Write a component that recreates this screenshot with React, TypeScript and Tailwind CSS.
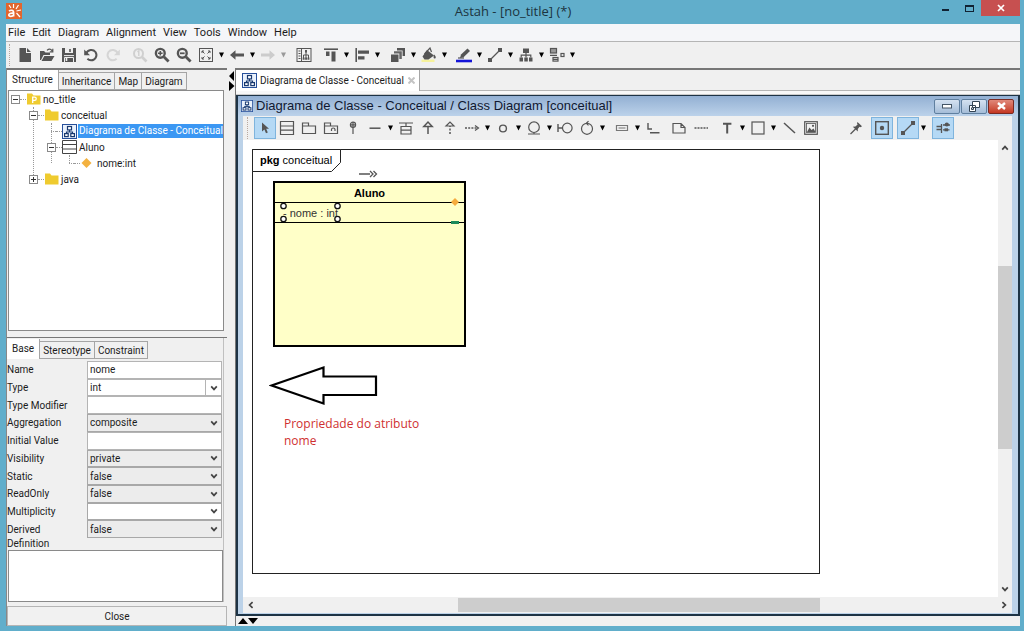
import type { ReactNode } from "react";

type IconProps = { children: ReactNode; size?: string; box?: string };

function Icon({ children, size = "size-4", box = "0 0 16 16" }: IconProps) {
  return (
    <svg viewBox={box} className={`${size} shrink-0`} fill="none" stroke="#555" strokeWidth="1.2" aria-hidden="true">
      {children}
    </svg>
  );
}

const Caret = ({ muted = false }: { muted?: boolean }) => (
  <svg viewBox="0 0 5 6" className="h-1.5 w-[5px]" aria-hidden="true">
    <path d="M0 0.5H5L2.5 5.5Z" fill={muted ? "#999" : "#000"} />
  </svg>
);

type Tool = {
  label: string;
  icon: ReactNode;
  caret?: boolean;
  muted?: boolean;
  active?: boolean;
  gap?: string;
};

function ToolItem({ label, icon, caret, muted, active, gap = "" }: Tool) {
  return (
    <div className={`flex shrink-0 items-center ${gap}`}>
      <button
        type="button"
        aria-label={label}
        className={`flex h-[22px] w-[22px] items-center justify-center border ${active ? "border-[#7fb4dd] bg-[#b5d9f5]" : "border-transparent"}`}
      >
        {icon}
      </button>
      {caret && (
        <button type="button" aria-label={`${label} options`} className="flex h-[22px] w-[9px] items-center justify-center">
          <Caret muted={muted} />
        </button>
      )}
    </div>
  );
}

const Grip = () => <span className="h-[22px] w-[3px] shrink-0 border-l border-dotted border-[#b8a8a0]" />;

const DiagramGlyph = ({ size = "size-[15px]" }: { size?: string }) => (
  <svg viewBox="0 0 15 15" className={`${size} shrink-0`} fill="none" aria-hidden="true">
    <rect x="0.5" y="0.5" width="14" height="14" fill="#e9f1fc" stroke="#27509b" />
    <g stroke="#17386f" strokeWidth="1.2">
      <rect x="5.5" y="2.5" width="4" height="3.4" fill="#fff" />
      <path d="M7.5 6V8M4.5 10V8H10.5V10" />
      <rect x="2.6" y="9.6" width="3.6" height="3" fill="#fff" />
      <rect x="8.8" y="9.6" width="3.6" height="3" fill="#fff" />
    </g>
  </svg>
);

const g = "#555";

const mainTools: Tool[] = [
  { label: "New", icon: <Icon><path d="M2.5 1H9V6H14V15H2.5ZM10 1L14 5H10Z" fill={g} stroke="none" /></Icon> },
  { label: "Open", icon: <Icon><path d="M1 13V4H5L6.5 5.5H11V8H4.5L2 13ZM5.3 9H15.5L12.5 14H2.5Z" fill={g} stroke="none" /><path d="M8 3.4C10 1.4 12 1.8 13.2 4M13.8 1.8V4.8H10.8" /></Icon> },
  { label: "Save", icon: <Icon><path d="M1 1H15V15H1Z" fill={g} stroke="none" /><path d="M4 1V6H12V1Z" fill="#eee" stroke="none" /><path d="M9 2V5" strokeWidth="1.6" /><path d="M3 8.6H13M3.5 15V10.5H12.5V15" stroke="#eee" strokeWidth="1" /><path d="M5.5 11V14" stroke="#eee" strokeWidth="1.6" /></Icon> },
  { label: "Undo", icon: <Icon><path d="M3 6.5C5 2.5 10 1.8 12.5 5C15 9 12 13.5 8 13.3C6.5 13.2 5.3 12.6 4.4 11.8" strokeWidth="2" /><path d="M1.2 2.5V8.2H7Z" fill={g} stroke="none" /></Icon> },
  { label: "Redo", icon: <Icon><g stroke="#d5d5d5"><path d="M13 6.5C11 2.5 6 1.8 3.5 5C1 9 4 13.5 8 13.3C9.5 13.2 10.7 12.6 11.6 11.8" strokeWidth="2" /><path d="M14.8 2.5V8.2H9Z" fill="#d5d5d5" stroke="none" /></g></Icon> },
  { label: "Zoom to 100%", gap: "ml-[5px]", icon: <Icon><g stroke="#d0d0d0"><circle cx="6.5" cy="6.5" r="4.5" strokeWidth="2" /><path d="M10 10L14.5 14.5" strokeWidth="2.6" /><path d="M5.5 5L6.8 4V9" strokeWidth="1.4" /></g></Icon> },
  { label: "Zoom in", icon: <Icon><circle cx="6.3" cy="6.3" r="4.4" strokeWidth="2.4" /><path d="M9.8 9.8L14.6 14.6" strokeWidth="2.8" /><path d="M6.3 4V8.6M4 6.3H8.6" strokeWidth="1.6" /></Icon> },
  { label: "Zoom out", icon: <Icon><circle cx="6.3" cy="6.3" r="4.4" strokeWidth="2.4" /><path d="M9.8 9.8L14.6 14.6" strokeWidth="2.8" /><path d="M4 6.3H8.6" strokeWidth="1.8" /></Icon> },
  { label: "Fit in window", caret: true, icon: <Icon><rect x="1.5" y="1.5" width="13" height="13" strokeWidth="1" /><path d="M6.5 6.5L4 4M4 6V4H6M9.5 6.5L12 4M10 4H12V6M6.5 9.5L4 12M4 10V12H6M9.5 9.5L12 12M10 12H12V10" strokeWidth="1" /></Icon> },
  { label: "Back", caret: true, icon: <Icon><path d="M1 8L6.5 3.2V6.6H15V9.4H6.5V12.8Z" fill={g} stroke="none" /></Icon> },
  { label: "Forward", caret: true, muted: true, icon: <Icon><path d="M15 8L9.5 3.2V6.6H1V9.4H9.5V12.8Z" fill="#ccc" stroke="none" /></Icon> },
  { label: "Mapping view", gap: "ml-[5px]", icon: <Icon><rect x="1" y="1.5" width="14" height="13" strokeWidth="1" /><path d="M5.5 1.5V14.5M2.5 4H4.5M2.5 6.5H4.5M2.5 9H4.5M2.5 11.5H4.5M10 5V8M7.5 11V8H12.5V11M10 8V11" strokeWidth="1" /><path d="M9 3H11V5.4H9ZM6.7 10.4H8.6V12.8H6.7ZM9.1 10.4H11V12.8H9.1ZM11.5 10.4H13.4V12.8H11.5Z" fill={g} stroke="none" /></Icon> },
  { label: "Align top", caret: true, gap: "ml-[5px]", icon: <Icon><path d="M1 2.2H15" strokeWidth="1.6" /><path d="M3 4.4H6.5V9H3ZM8.5 4.4H12.5V14.5H8.5Z" fill={g} stroke="none" /></Icon> },
  { label: "Align left", caret: true, icon: <Icon><path d="M2.2 1V15" strokeWidth="1.6" /><path d="M4 3.5H15V6.7H4ZM4 9.2H10.5V12.4H4Z" fill={g} stroke="none" /></Icon> },
  { label: "Bring to front", caret: true, gap: "ml-[5px]", icon: <Icon><path d="M7 1H15V9H12.6V3.4H7ZM1 7.4H8.5V15H1Z" fill={g} stroke="none" /><path d="M4 4.2H11.8V12H9.3V6.6H4Z" fill="#666" stroke="none" /></Icon> },
  { label: "Fill color", caret: true, icon: <Icon><path d="M0.5 13.8H13.5" stroke="#f6f29c" strokeWidth="2.4" /><path d="M6 3L13 8.5L7.5 12.5H3.5L1.5 9.5Z" fill={g} stroke="none" /><path d="M3.5 7L9 1L10.5 5" /><path d="M13 7.5C15.5 9.5 15 11.5 13.6 11.5C12.3 11.5 12.3 9.6 13 7.5Z" fill={g} stroke="none" /></Icon> },
  { label: "Line color", caret: true, gap: "ml-1", icon: <Icon><path d="M0 14H16" stroke="#1414d8" strokeWidth="2.6" /><path d="M4 11L5 7.5L11.5 1.5L14 4L7.5 10.2Z" fill={g} stroke="none" /><path d="M2 11H8" /></Icon> },
  { label: "Line style", caret: true, icon: <Icon><path d="M3 13L13 3" /><path d="M1 11H5V15H1ZM11 1H15V5H11Z" fill={g} stroke="none" /></Icon> },
  { label: "Tree layout", caret: true, icon: <Icon><path d="M5 1.5H11V6H5ZM1.5 10.5H5V14.5H1.5ZM6.3 10.5H9.8V14.5H6.3ZM11 10.5H14.5V14.5H11Z" fill={g} stroke="none" /><path d="M8 6V10.5M3.2 10.5V8.2H12.8V10.5" /></Icon> },
  { label: "Auto layout", caret: true, icon: <Icon><rect x="1.5" y="1.5" width="6" height="4.5" fill="#999" /><rect x="4" y="10.5" width="5" height="3.6" /><path d="M4 12.3H9M1 8.3H8" /><rect x="12" y="6.5" width="3" height="3" /></Icon> },
];

const diagramTools: Tool[] = [
  { label: "Select", active: true, icon: <Icon><path d="M5 2.5L12 8.7H9.2L10.8 12.4L9 13.2L7.4 9.6L5 11.6Z" fill={g} stroke="none" /></Icon> },
  { label: "Class", icon: <Icon><path d="M1.5 1.5H14.5V14.5H1.5ZM1.5 6H14.5M1.5 10.2H14.5" /></Icon> },
  { label: "Package", icon: <Icon><path d="M1.5 13.5V3H7.5V6H14.5V13.5ZM1.5 6H7.5" /></Icon> },
  { label: "Subsystem", icon: <Icon><path d="M1.5 13.5V3H7.5V6H14.5V13.5ZM1.5 6H7.5M8.5 11V9.5C8.5 7.5 12 7.5 12 9.5V11" /></Icon> },
  { label: "Nested class", icon: <Icon><circle cx="8" cy="4.8" r="2.6" /><path d="M8 2.2V14M5.4 4.8H10.6" /></Icon> },
  { label: "Association", caret: true, icon: <Icon><path d="M2.5 8.2H13.5" strokeWidth="1.5" /></Icon> },
  { label: "Association class", icon: <Icon><path d="M1 3H15M8 3V6.5M3 6.5H13V14H3ZM3 10.2H13" /></Icon> },
  { label: "Generalization", icon: <Icon><path d="M8 14V6.5M3.8 6.5L8 2L12.2 6.5Z" strokeWidth="1.5" /></Icon> },
  { label: "Realization", icon: <Icon><path d="M8 14V6" strokeDasharray="2 1.5" strokeWidth="1.5" /><path d="M4 6L8 2L12 6Z" /></Icon> },
  { label: "Dependency", caret: true, icon: <Icon><path d="M1 8H13" strokeDasharray="2 1.2" strokeWidth="1.4" /><path d="M11 5.5L14.5 8L11 10.5" /></Icon> },
  { label: "Interface", caret: true, icon: <Icon><circle cx="8" cy="8.5" r="3.4" strokeWidth="1.4" /></Icon> },
  { label: "Entity", caret: true, icon: <Icon><circle cx="8" cy="7.2" r="5.3" /><path d="M2 14H14M8 12.5V14" /></Icon> },
  { label: "Boundary", icon: <Icon><circle cx="10.3" cy="8" r="4.8" /><path d="M1 4V12M1 8H5.5" strokeWidth="1.4" /></Icon> },
  { label: "Control", caret: true, icon: <Icon><circle cx="8" cy="8.8" r="5.5" /><path d="M9.5 1.2L7.4 3.3L9.5 5.4" /></Icon> },
  { label: "Instance", caret: true, gap: "ml-1", icon: <Icon><path d="M2.5 5.5H13.5V10.5H2.5ZM4.5 8H11.5" stroke="#777" /></Icon> },
  { label: "Link", icon: <Icon><path d="M3 3V9H7M5 12.7H14.5" strokeWidth="1.4" /></Icon> },
  { label: "Note", gap: "ml-1", icon: <Icon><path d="M2 3.5H10L14 7.5V13H2ZM10 3.5V7.5H14" /></Icon> },
  { label: "Note anchor", icon: <Icon><path d="M1.5 8H15" strokeDasharray="2 1" strokeWidth="1.5" /></Icon> },
  { label: "Text", caret: true, gap: "ml-1", icon: <Icon><path d="M4 3.8H12.4M8.2 3.8V13.5" strokeWidth="2" /></Icon> },
  { label: "Rectangle", caret: true, icon: <Icon><rect x="2" y="2" width="12" height="12" /></Icon> },
  { label: "Line", icon: <Icon><path d="M3 3L14 13" strokeWidth="1.5" /></Icon> },
  { label: "Image", icon: <Icon><rect x="1.7" y="1.7" width="12.6" height="12.6" /><rect x="3.5" y="3.5" width="9" height="9" strokeWidth="0.8" /><path d="M4 12L6.5 7.5L8.5 10L10.5 8.5L12.5 12Z" fill={g} stroke="none" /><circle cx="10" cy="5.8" r="1.1" fill={g} stroke="none" /></Icon> },
  { label: "Lock tool", gap: "ml-[23px]", icon: <Icon><path d="M2.5 14L8 8.5" /><path d="M9.5 2L14 6.2L12.5 7.2L11.5 6.8L9.8 9V11.5L4.8 6.8L7.4 6.5L9.6 4.6L9 3.2Z" fill={g} stroke="none" /></Icon> },
  { label: "Center alignment", active: true, gap: "ml-1", icon: <Icon><rect x="1.7" y="1.7" width="12.6" height="12.6" strokeWidth="1.4" /><circle cx="8" cy="8" r="2.2" fill={g} stroke="none" /></Icon> },
  { label: "Line mode", active: true, caret: true, gap: "ml-1", icon: <Icon><path d="M3 13L13 3" /><path d="M1 11H5V15H1ZM11 1H15V5H11Z" fill={g} stroke="none" /></Icon> },
  { label: "Alignment guides", active: true, gap: "ml-1", icon: <Icon><path d="M1.5 6.5H6.5M1.5 9.5H6.5M6.5 4V13M8 9.8H14.5M8 5H15" strokeWidth="1.3" /><circle cx="11.8" cy="4.5" r="2.1" fill={g} stroke="none" /><path d="M9.5 8.3H13V11.3H9.5Z" fill={g} stroke="none" /></Icon> },
];

const FolderIcon = ({ project = false }: { project?: boolean }) => (
  <svg viewBox="0 0 16 14" className="h-3.5 w-4 shrink-0" aria-hidden="true">
    <path d="M1 1.5H6L7.5 3.5H14.5V12.5H1Z" fill="#efcb2f" />
    {project && <path d="M6.7 11V5.2H8.6C10.8 5.2 10.8 8.4 8.6 8.4H6.7" fill="none" stroke="#fff" strokeWidth="1.3" />}
  </svg>
);

const ClassIcon = () => (
  <svg viewBox="0 0 16 16" className="size-4 shrink-0" fill="#fff" stroke="#444" aria-hidden="true">
    <path d="M0.5 1.5H14.5V14.5H0.5ZM0.5 5.5H14.5M0.5 10H14.5" />
  </svg>
);

type Node = { name: string; icon: ReactNode; state?: "open" | "closed"; selected?: boolean; children?: Node[] };

const tree: Node[] = [
  {
    name: "no_title",
    icon: <FolderIcon project />,
    state: "open",
    children: [
      {
        name: "conceitual",
        icon: <FolderIcon />,
        state: "open",
        children: [
          { name: "Diagrama de Classe - Conceitual", icon: <DiagramGlyph size="mr-px size-[15px]" />, selected: true },
          {
            name: "Aluno",
            icon: <ClassIcon />,
            state: "open",
            children: [
              {
                name: "nome:int",
                icon: (
                  <svg viewBox="0 0 16 16" className="size-4 shrink-0" aria-hidden="true">
                    <path d="M6.5 3L11.5 8L6.5 13L1.5 8Z" fill="#f3b13f" />
                  </svg>
                ),
              },
            ],
          },
        ],
      },
      { name: "java", icon: <FolderIcon />, state: "closed" },
    ],
  },
];

function TreeList({ nodes, root = false }: { nodes: Node[]; root?: boolean }) {
  return (
    <ul className={root ? "" : "relative ml-[18px]"}>
      {!root && <li aria-hidden="true" className="absolute top-0 bottom-2 left-1 border-l border-dotted border-[#999]" />}
      {nodes.map((n) => (
        <li key={n.name}>
          <div className="relative flex h-4 items-center whitespace-nowrap">
            {n.state ? (
              <button
                type="button"
                aria-label={`Toggle ${n.name}`}
                className="flex size-[9px] shrink-0 items-center justify-center border border-[#8a8a8a] bg-white"
              >
                <svg viewBox="0 0 5 5" className="size-[5px]" stroke="#333" aria-hidden="true">
                  <path d={n.state === "open" ? "M0 2.5H5" : "M0 2.5H5M2.5 0V5"} />
                </svg>
              </button>
            ) : (
              <span className="ml-1 w-[5px] shrink-0 border-t border-dotted border-[#999]" />
            )}
            <span className="w-1.5 shrink-0 border-t border-dotted border-[#999]" />
            {n.icon}
            <span className={n.selected ? "bg-[#3b97f3] pl-px leading-[14px] text-white" : "px-px"}>{n.name}</span>
          </div>
          {n.children && <TreeList nodes={n.children} />}
        </li>
      ))}
    </ul>
  );
}

function Tabs({ items, label }: { items: string[]; label: string }) {
  return (
    <div role="tablist" aria-label={label} className="flex h-5 items-end">
      {items.map((t, i) => (
        <button
          key={t}
          type="button"
          role="tab"
          aria-selected={i === 0}
          className={
            i === 0
              ? "h-5 border-r border-[#a5a5a5] bg-white px-[5px] pb-0.5"
              : "h-[18px] border-t border-r border-b border-[#a5a5a5] bg-[#f0f0f0] px-[3px]"
          }
        >
          {t}
        </button>
      ))}
    </div>
  );
}

const Chevron = ({ turn = "" }: { turn?: string }) => (
  <svg viewBox="0 0 8 8" className={`size-2 ${turn}`} fill="none" stroke="#444" strokeWidth="1.7" aria-hidden="true">
    <path d="M1.2 2.4L4 5.4L6.8 2.4" />
  </svg>
);

type Field = { label: string; kind: "text" | "select" | "combo" | "whiteSelect"; value: string };

const fields: Field[] = [
  { label: "Name", kind: "text", value: "nome" },
  { label: "Type", kind: "combo", value: "int" },
  { label: "Type Modifier", kind: "text", value: "" },
  { label: "Aggregation", kind: "select", value: "composite" },
  { label: "Initial Value", kind: "text", value: "" },
  { label: "Visibility", kind: "select", value: "private" },
  { label: "Static", kind: "select", value: "false" },
  { label: "ReadOnly", kind: "select", value: "false" },
  { label: "Multiplicity", kind: "whiteSelect", value: "" },
  { label: "Derived", kind: "select", value: "false" },
];

function FieldRow({ label, kind, value }: Field) {
  const id = `field-${label.toLowerCase().replace(" ", "-")}`;
  const isSelect = kind === "select" || kind === "whiteSelect";
  return (
    <div className="flex min-h-0 items-stretch">
      <label htmlFor={id} className="flex w-20 shrink-0 items-center">{label}</label>
      <div className="relative flex min-w-0 flex-1">
        {isSelect ? (
          <>
            <select
              id={id}
              defaultValue={value}
              className={`w-full appearance-none border border-[#a8a8a8] px-0.5 ${kind === "select" ? "bg-[#ececec]" : "bg-white"}`}
            >
              <option>{value}</option>
            </select>
            <span className="pointer-events-none absolute inset-y-0 right-1 flex items-center"><Chevron /></span>
          </>
        ) : (
          <input id={id} defaultValue={value} className="w-full min-w-0 border border-[#b4b4b4] bg-white px-0.5" />
        )}
        {kind === "combo" && (
          <button type="button" aria-label="Choose type" className="flex w-4 shrink-0 items-center justify-center border-y border-r border-[#b4b4b4] bg-white">
            <Chevron />
          </button>
        )}
      </div>
    </div>
  );
}

function SidePanel() {
  return (
    <aside className="flex w-[221px] shrink-0 flex-col border-l border-[#888]">
      <section className="flex flex-1 flex-col border-t-2 border-[#777] pr-[3px]">
        <Tabs label="Views" items={["Structure", "Inheritance", "Map", "Diagram"]} />
        <div className="ml-px flex-1 border border-[#8a8a8a] bg-white pl-0.5">
          <TreeList nodes={tree} root />
        </div>
      </section>
      <section className="mt-1.5 flex flex-col border-t border-[#777]">
        <div className="mr-[3px] flex flex-col border-r border-[#c0c0c0] pt-px">
          <Tabs label="Properties" items={["Base", "Stereotype", "Constraint"]} />
          <div className="mt-0.5 grid h-[177px] auto-rows-fr pr-px">
            {fields.map((f) => <FieldRow key={f.label} {...f} />)}
          </div>
          <label htmlFor="definition" className="h-3 leading-3">Definition</label>
          <textarea id="definition" className="ml-px block h-[52px] resize-none border border-[#8a8a8a] bg-white" />
        </div>
        <button type="button" className="mt-1 h-5 border border-[#b5b5b5] bg-[#f1f1f1]">Close</button>
      </section>
    </aside>
  );
}

function Canvas() {
  return (
    <div className="relative min-w-0 flex-1 overflow-hidden bg-white font-['Liberation_Sans',sans-serif] text-[11px] text-black">
      <div className="absolute top-[9px] left-[9px] h-[425px] w-[568px] border border-[#222]" />
      <div className="absolute top-[9px] left-[9px] h-[23px] w-[89px]">
        <svg viewBox="0 0 89 23" className="absolute inset-0 size-full" fill="#fff" stroke="#222" aria-hidden="true">
          <path d="M0.5 0.5H88.5V13.5L79.5 22.5H0.5Z" />
        </svg>
        <p className="relative pl-2 leading-[23px]"><b>pkg</b> conceitual</p>
      </div>
      <svg viewBox="0 0 20 10" className="absolute top-[29px] left-[115px] h-2.5 w-5" fill="none" stroke="#555" strokeWidth="1.3" aria-hidden="true">
        <path d="M1 5H12M12 2L15 5L12 8M15.5 2L18.5 5L15.5 8" />
      </svg>
      <div className="absolute top-[41px] left-[30px] h-[166px] w-[193px] border-2 border-black bg-[#ffffc8]">
        <h2 className="h-5 border-b border-black text-center leading-5 font-bold">Aluno</h2>
        <p className="h-5 border-b border-black pl-2 leading-5 text-[#333]">- nome : int</p>
      </div>
      <svg viewBox="0 0 190 24" className="absolute top-[60px] left-[32px] h-6 w-[190px] overflow-visible" aria-hidden="true">
        <g fill="#fff" stroke="#111" strokeWidth="1.3">
          <circle cx="8.5" cy="6" r="2.7" />
          <circle cx="62.5" cy="6" r="2.7" />
          <circle cx="8.5" cy="19" r="2.7" />
          <circle cx="62.5" cy="19" r="2.7" />
        </g>
        <path d="M180 -2L184 2L180 6L176 2Z" fill="#f5ab3d" />
        <path d="M176 21H184V24H176Z" fill="#1c8a5a" />
      </svg>
      <svg viewBox="0 0 110 42" className="absolute top-[225px] left-[26px] h-[42px] w-[110px]" fill="#fff" stroke="#000" strokeWidth="2.2" aria-hidden="true">
        <path d="M2.5 20.5L54.5 2.5V11.5H107V30H54.5V38.5Z" />
      </svg>
      <p className="absolute top-[275px] left-[41px] w-40 font-['Open_Sans',sans-serif] text-xs leading-[17px] text-[#cf3030]">
        Propriedade do atributo<br />nome
      </p>
    </div>
  );
}

function DiagramWindow() {
  const frameButton = "flex h-[15px] items-center justify-center rounded-xs border border-[#5f7f9f] bg-linear-to-b from-[#d5e2f1] to-[#a5bdd8]";
  return (
    <section className="flex flex-1 flex-col border-2 border-t border-[#1d3345] bg-[#bcd2e8]">
      <header className="flex h-5 items-center bg-linear-to-b from-[#93b0d3] to-[#bcd2ea] pr-1 pl-[3px]">
        <DiagramGlyph size="size-3" />
        <h1 className="ml-[3px] flex-1 truncate font-['Liberation_Sans',sans-serif] text-[13px] leading-[18px] text-[#101830]">
          Diagrama de Classe - Conceitual / Class Diagram [conceitual]
        </h1>
        <div className="flex gap-px">
          <button type="button" aria-label="Minimize diagram" className={`${frameButton} w-[26px]`}>
            <svg viewBox="0 0 10 5" className="h-[5px] w-2.5" aria-hidden="true"><rect x="0.5" y="0.5" width="9" height="3.5" fill="#fff" stroke="#456" /></svg>
          </button>
          <button type="button" aria-label="Restore diagram" className={`${frameButton} w-[26px]`}>
            <svg viewBox="0 0 12 11" className="h-[11px] w-3" fill="#fff" stroke="#345" aria-hidden="true"><path d="M4.5 0.5H11.5V6.5H4.5ZM1.5 4.5H7.5V10.5H1.5ZM3.5 6.8H5.5V8.5H3.5Z" /></svg>
          </button>
          <button type="button" aria-label="Close diagram" className="flex h-[15px] w-[26px] items-center justify-center rounded-xs border border-[#7a2a22] bg-linear-to-b from-[#e0887a] to-[#c43520]">
            <svg viewBox="0 0 9 8" className="h-2 w-[9px]" stroke="#fff" strokeWidth="2.4" aria-hidden="true"><path d="M1 1L8 7M8 1L1 7" /></svg>
          </button>
        </div>
      </header>
      <div className="mr-1.5 mb-px ml-[5px] flex flex-1 flex-col">
        <div role="toolbar" aria-label="Diagram elements" className="flex h-6 items-center bg-[#f0f0f0] pl-1">
          <Grip />
          <div className="ml-1 flex">{diagramTools.map((t) => <ToolItem key={t.label} {...t} />)}</div>
        </div>
        <div className="flex flex-1 bg-white">
          <Canvas />
          <div className="flex w-3.5 flex-col bg-[#f0f0f0]">
            <button type="button" aria-label="Scroll up" className="flex h-4 items-center justify-center"><Chevron turn="rotate-180" /></button>
            <span className="grow-[110]" />
            <span className="grow-[184] bg-[#cdcdcd]" />
            <span className="grow-[132]" />
            <button type="button" aria-label="Scroll down" className="flex h-4 items-center justify-center"><Chevron /></button>
          </div>
        </div>
        <div className="flex h-4 bg-[#f0f0f0]">
          <button type="button" aria-label="Scroll left" className="flex w-4 items-center justify-center"><Chevron turn="rotate-90" /></button>
          <span className="grow-[199]" />
          <span className="my-px grow-[361] bg-[#cdcdcd]" />
          <span className="grow-[176]" />
          <button type="button" aria-label="Scroll right" className="flex w-4 items-center justify-center"><Chevron turn="-rotate-90" /></button>
        </div>
      </div>
    </section>
  );
}

export default function App() {
  return (
    <div className="flex min-h-screen flex-col bg-[#61aecb] pr-1 pb-[5px] pl-1.5 font-['Roboto',sans-serif] text-[10px] text-[#1c1c1c]">
      <header className="relative flex h-6 items-center justify-center">
        <svg viewBox="0 0 16 16" className="absolute top-[3px] left-0 size-4" aria-hidden="true">
          <rect width="16" height="16" fill="#e2662e" />
          <path d="M3 8.2C5 6.6 7.6 7.2 7.6 9.2V13.5M7.6 10.2C4.8 9.8 2.8 10.6 2.8 12C2.8 13.8 6.6 13.8 7.6 11.8" fill="none" stroke="#fff" strokeWidth="1.7" />
          <path d="M7.5 1V5M3 2L5 5M12.5 2L10 6M15 7L10.5 8M10.5 10L14 14" stroke="#fff" strokeWidth="1.2" />
        </svg>
        <span className="font-['Open_Sans',sans-serif] text-[13px] text-[#1c3440]">Astah - [no_title] (*)</span>
        <div className="absolute top-0 right-0 flex h-4">
          <button type="button" aria-label="Minimize" className="flex w-6 items-center justify-center"><span className="mt-1 h-0.5 w-[7px] bg-[#123]" /></button>
          <button type="button" aria-label="Maximize" className="flex w-6 items-center justify-center"><span className="h-[7px] w-[9px] border border-t-2 border-[#123]" /></button>
          <button type="button" aria-label="Close" className="flex w-[39px] items-center justify-center bg-[#c75050]">
            <svg viewBox="0 0 8 8" className="size-2" stroke="#fff" strokeWidth="1.7" aria-hidden="true"><path d="M1 1L7 7M7 1L1 7" /></svg>
          </button>
        </div>
      </header>
      <div className="flex flex-1 flex-col bg-[#f0f0f0]">
        <nav aria-label="Main menu" className="flex h-[18px] items-end gap-[7px] border-b border-[#b5b5b5] bg-[#f5f6f9] pl-0.5 text-[11px]">
          {["File", "Edit", "Diagram", "Alignment", "View", "Tools", "Window", "Help"].map((m) => (
            <button key={m} type="button" className="leading-4">{m}</button>
          ))}
        </nav>
        <div role="toolbar" aria-label="Main tools" className="flex h-[26px] items-center pl-[3px]">
          <Grip />
          <div className="ml-0.5 flex">{mainTools.map((t) => <ToolItem key={t.label} {...t} />)}</div>
        </div>
        <main className="flex flex-1">
          <SidePanel />
          <div className="flex w-2 shrink-0 flex-col items-end pt-0.5">
            <svg viewBox="0 0 7 22" className="h-[22px] w-[7px]" aria-hidden="true"><path d="M6 1V11L1 6ZM1 11V21L6.5 16Z" fill="#000" /></svg>
          </div>
          <div className="flex min-w-0 flex-1 flex-col border-t-2 border-l border-[#777]">
            <div role="tablist" aria-label="Open diagrams" className="flex h-[21px] border-b border-[#b5b5b5]">
              <div className="-mb-px flex items-center border-r border-[#a5a5a5] bg-white pr-1 pl-1.5">
                <button type="button" role="tab" aria-selected="true" className="flex items-center gap-[3px]"><DiagramGlyph />Diagrama de Classe - Conceitual</button>
                <button type="button" aria-label="Close tab" className="ml-1">
                  <svg viewBox="0 0 7 7" className="size-[7px]" stroke="#c4c4c4" strokeWidth="2" aria-hidden="true"><path d="M0.5 0.5L6.5 6.5M6.5 0.5L0.5 6.5" /></svg>
                </button>
              </div>
            </div>
            <div className="h-1 border-b border-[#ccc] bg-[#f8f8f8]" />
            <DiagramWindow />
            <div className="flex h-[10px] items-center pl-0.5">
              <svg viewBox="0 0 20 6" className="h-1.5 w-5" aria-hidden="true"><path d="M0 6L5 0L10 6ZM10 0H20L15 6Z" fill="#000" /></svg>
            </div>
          </div>
        </main>
      </div>
    </div>
  );
}
